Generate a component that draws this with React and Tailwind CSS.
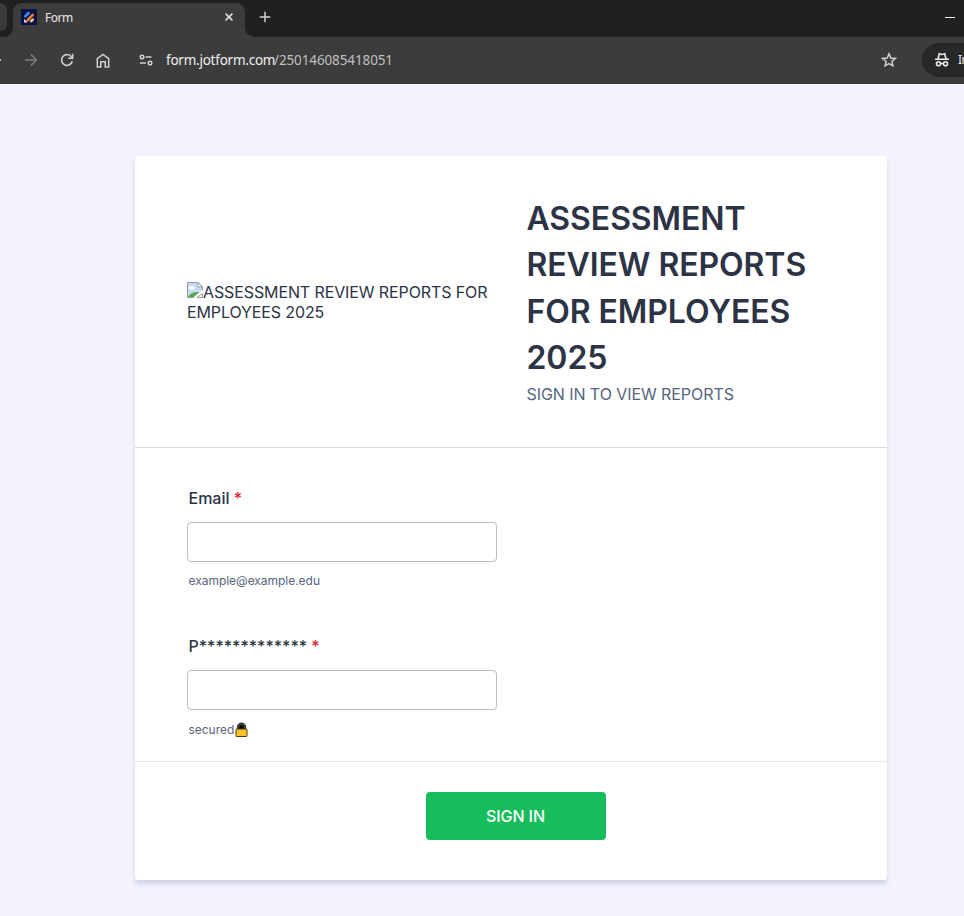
function TabStrip() {
  return (
    <div className="flex h-[37px] items-start overflow-hidden bg-[#202020]">
      <div className="mt-[3px] h-[28px] w-[7px] shrink-0 rounded-r-[9px] bg-[#3a3a3a]" />
      <svg width="252" height="34" viewBox="0 0 252 34" className="-mr-[252px] mt-[3px] shrink-0" fill="#3c3c3c">
        <path d="M-6 34C3 34 6 30 6 24V10C6 4 9 0 15 0H229C235 0 238 4 238 10V24C238 30 242 34 250 34Z" />
      </svg>
      <div className="relative ml-[14px] mt-[3px] flex h-[28px] w-[224px] items-center">
        <svg width="16" height="16" viewBox="0 0 16 16" className="shrink-0">
          <rect width="16" height="16" fill="#0d1142" />
          <g strokeLinecap="round" fill="none">
            <path d="M4.2 7.4 7.6 4" stroke="#2f8fff" strokeWidth="2.6" />
            <path d="M6.4 11.4 11.7 5.9" stroke="#f37f35" strokeWidth="2.6" />
            <path d="M10.2 12.1 11.7 10.6" stroke="#f5d08a" strokeWidth="2.6" />
          </g>
          <path d="M3 10v3.5h3.500z" fill="#dfe2f5" />
        </svg>
        <span className="ml-2 pt-px text-[12px] tracking-[-0.5px] text-[#e8e8e8]">Form</span>
        <svg width="8" height="8" viewBox="0 0 8 8" className="ml-auto mr-[12px]" stroke="#e2e2e2" strokeWidth="1.5">
          <path d="M.6.6 7.4 7.4M7.4.6.6 7.4" />
        </svg>
      </div>
      <svg width="12" height="12" viewBox="0 0 12 12" className="ml-[14px] mt-[11px]" stroke="#d0d0d0" strokeWidth="1.5">
        <path d="M6 .7V11.3M.7 6H11.3" />
      </svg>
      <div className="ml-auto mr-[9px] mt-[17px] h-px w-[10px] bg-white" />
    </div>
  );
}

function Toolbar() {
  return (
    <div className="flex h-[47px] items-center overflow-hidden bg-[#3c3c3c] pb-px">
      <div className="h-[2px] w-px shrink-0 bg-[#bbb]" />
      <svg width="14" height="14" viewBox="0 0 14 14" className="ml-[23px] shrink-0" fill="none" stroke="#7d7d7d" strokeWidth="1.5">
        <path d="M1 7H12M7 1.500 12.400 7 7 12.500" />
      </svg>
      <svg width="14" height="14" viewBox="0 0 14 14" className="ml-[22px] shrink-0" fill="none" stroke="#d0d0d0" strokeWidth="1.6">
        <path d="M12.300 8.200A5.400 5.400 0 1 1 10.900 3.200L12.400 4.800" />
        <path d="M12.600.8V5.200H8.200" />
      </svg>
      <svg width="14" height="15" viewBox="0 0 14 15" className="ml-[22px] shrink-0" fill="none" stroke="#d0d0d0" strokeWidth="1.5">
        <path d="M1.300 14V5.700L7 1.400 12.700 5.700V14H9.200V8.800H4.800V14Z" />
      </svg>
      <svg width="14" height="12" viewBox="0 0 14 12" className="ml-[29px] shrink-0" fill="none" stroke="#d0d0d0" strokeWidth="1.5">
        <circle cx="3" cy="3" r="1.8" />
        <path d="M6.500 3H12.500M1 9H7" />
        <circle cx="11" cy="9" r="1.8" />
      </svg>
      <div className="ml-[13px] flex text-[13.5px] leading-5 text-[#f0f0f0]">
        <span className="w-[108px] whitespace-nowrap tracking-[-0.24px]">form.jotform.com</span>
        <span className="tracking-[-0.12px] text-[#bfbfbf]">/250146085418051</span>
      </div>
      <svg width="16" height="16" viewBox="0 0 16 16" className="ml-auto mr-[25px] shrink-0" fill="none" stroke="#d0d0d0" strokeWidth="1.5">
        <path d="M8 1.800 9.800 6l4.500.4-3.400 3 1 4.400L8 11.500l-3.900 2.300 1-4.400-3.400-3L6.200 6Z" />
      </svg>
      <div className="flex h-[34px] w-[42px] shrink-0 items-center overflow-hidden rounded-l-full bg-[#282828] pl-[12px]">
        <svg width="16" height="16" viewBox="0 0 16 16" className="shrink-0" fill="none" stroke="#ececec" strokeWidth="1.6">
          <path d="M1 7.300H15M4 7 5.300 1.800 8 2.500l2.700-.7L12 7" />
          <circle cx="4.500" cy="11.700" r="2" />
          <circle cx="11.500" cy="11.700" r="2" />
          <path d="M6.500 11.500h3" />
        </svg>
        <span className="ml-[8px] text-[12px] tracking-[-0.5px] text-[#e8e8e8]">In</span>
      </div>
    </div>
  );
}

function BrokenImage() {
  return (
    <svg width="16" height="16" viewBox="0 0 16 16" className="inline-block align-baseline">
      <path d="M.5 .5H11L15.500 5V9L7 15.500H.5Z" fill="#c9daf8" stroke="#9a9a9a" />
      <path d="M11 .5V5h4.500Z" fill="#fff" stroke="#9a9a9a" />
      <path d="M3 7.500a1.500 1.500 0 0 1 .5-3 2 2 0 0 1 3.500.5 1.300 1.300 0 0 1 0 2.500Z" fill="#fff" />
      <path d="M1 15c2-3 5-5.500 9-5l2 .5L6.500 15Z" fill="#51a945" />
      <path d="M15.500 11.500v4H10Z" fill="#fff" stroke="#9a9a9a" />
      <path d="M16 8.500 7 16" stroke="#fff" strokeWidth="1.500" />
    </svg>
  );
}

function Lock() {
  return (
    <svg width="13" height="16" viewBox="0 0 13 16" className="ml-[0.8px]">
      <path d="M2.300 8V5.200a4.200 4.200 0 0 1 8.400 0V8Z" fill="#0c0c0c" stroke="#202020" />
      <path d="M3.300 6.500V5.200a3.200 3.200 0 0 1 6.400 0v1.300" fill="none" stroke="#858585" strokeWidth=".7" />
      <rect x="1" y="7" width="11" height="7.500" rx=".8" fill="#fbc326" stroke="#4a3c16" />
    </svg>
  );
}

function Field({ label, hint, children, type }) {
  return (
    <div className="flex w-[310px] flex-col">
      <label className="pl-[1.5px] text-[16px] font-medium leading-5 text-[#2c3345]">
        {label} <span className="text-[#d8232f]">*</span>
      </label>
      <input type={type} className="mt-[14px] h-[40px] w-full rounded-[4px] border border-[#b8bdc9] bg-white px-2 outline-none" />
      <div className={`flex h-[16px] items-center pl-[1.5px] text-[12px] tracking-[-0.03px] text-[#57647e] ${children ? "mt-[12px]" : "mt-[11px]"}`}>
        <span>{hint}</span>
        {children}
      </div>
    </div>
  );
}

export default function App() {
  return (
    <div className="flex h-[916px] w-[964px] flex-col overflow-hidden bg-[#f3f3fe]">
      <header className="font-['Noto_Sans','Open_Sans',sans-serif]">
        <TabStrip />
        <Toolbar />
      </header>
      <main className="ml-[135px] mt-[72px] h-[724px] w-[752px] rounded-[3px] bg-white font-['Inter',sans-serif] text-[#2c3345] shadow-[0_4px_4px_rgba(87,100,126,0.21)]">
        <section className="flex h-[292px] items-center border-b border-[#d7d8e1] pl-[52px]">
          <div className="w-[310px] text-[16px] leading-5 tracking-[-0.11px]">
            <BrokenImage />ASSESSMENT REVIEW REPORTS FOR EMPLOYEES 2025
          </div>
          <div className="ml-[29.5px] w-[308px] pb-[3px]">
            <h1 className="text-[32px] font-semibold leading-[46.4px] tracking-[-0.08px]">ASSESSMENT REVIEW REPORTS FOR EMPLOYEES 2025</h1>
            <p className="mt-[3px] text-[16px] leading-5 tracking-[-0.07px] text-[#57647e]">SIGN IN TO VIEW REPORTS</p>
          </div>
        </section>
        <section className="flex h-[314px] flex-col gap-[47px] border-b border-[#e6e6ed] pl-[52px] pt-[40px]">
          <Field label="Email" hint="example@example.edu" type="email" />
          <Field label="P*************" hint="secured" type="password">
            <Lock />
          </Field>
        </section>
        <section className="flex justify-center pl-[10px] pt-[30px]">
          <button className="h-[48px] w-[180px] rounded-[4px] bg-[#18bd5b] pr-px text-[16px] font-medium tracking-[-0.1px] text-white">SIGN IN</button>
        </section>
      </main>
    </div>
  );
}
